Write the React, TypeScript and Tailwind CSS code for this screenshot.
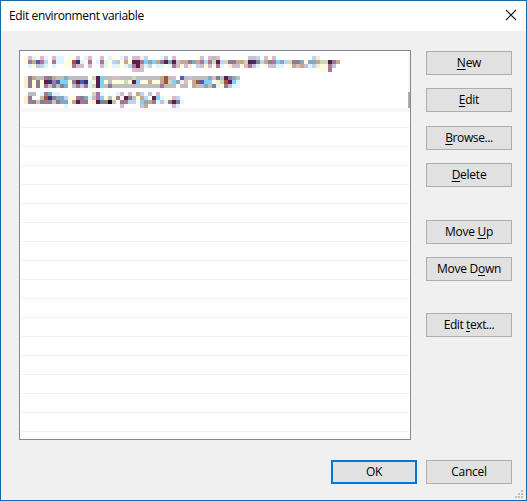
const PALETTE: Record<string, string> = {
  y: '#fffddb', c: '#def5ff', o: '#fdebd6', b: '#b9d8f0', v: '#c9c0dc', p: '#d6bcca',
  m: '#aa7596', d: '#5c1f4a', r: '#a5503f', k: '#33336b', n: '#17101c', g: '#bebebe',
  h: '#8b7d90', t: '#c4a78d', s: '#80d0ff', u: '#84a9bd', G: '#ced9b2', B: '#4d5cab',
};

const CELL = 4;

// Each string is one row of 4px mosaic cells; a dot leaves the cell empty.
const MOSAIC: string[] = [
  'yvcypc.pcc..yp.cp..p.cy.cp.pvob...cv.p.....yv.pgp.......vvb.pyp.........bo',
  'ymtBmb.mccyyrkcym.cmcybvytyddmsusthdudvtthutmbmGdbGhhttGdkhbthmsubGhhuyuutGGdht',
  '.cyvbc.c..yympp.p..pcyccycbmdpcb.ccycmpypo.bpypymc.oppypmvc.yvvcc.ytptvcboyymv',
  '...........................ppp............................................yym',
  '',
  'ohtggmhtgguggggg.GdsggppgggGggggggtrgp.Bgvgggguphgdhug',
  'ohyhydkmBssyhdBkcydsygyyyGydsyytyytrGsuopytrBssyoGrdsc',
  'ohyhymphghu.gmvmcGdsghggggggggggggmggg.gg.tggughcyhvcc',
  '',
  '.gg.cmucc........Gmc...cp.p.tb.v.p',
  'oh.ygrkhuubyymhucgmsygymydhgytbydsc.ypb',
  'omhphmhphuuytdmhyodhhngyhmbbysutmcvchdhc',
  '..........c.............p....vt......pc',
];

function ObscuredEntries() {
  return (
    <svg className="ml-1 mt-[5px] block" width="320" height="52" shapeRendering="crispEdges">
      {MOSAIC.flatMap((row, y) =>
        [...row].map((key, x) =>
          PALETTE[key] ? (
            <rect key={`${x}-${y}`} x={x * CELL} y={y * CELL} width={CELL} height={CELL} fill={PALETTE[key]} />
          ) : null,
        ),
      )}
    </svg>
  );
}

function Button({ label, accel, primary = false, className = '' }: { label: string; accel?: number; primary?: boolean; className?: string }) {
  const frame = primary ? 'border-2 border-[#0078d7]' : 'border border-[#adadad]';
  const tracking = label.endsWith('...') ? 'tracking-[-0.4px]' : 'tracking-[-0.25px]';
  return (
    <button className={`flex h-6 w-[86px] shrink-0 items-center justify-center whitespace-pre bg-[#e1e1e1] leading-none ${frame} ${tracking} ${className}`}>
      <span>
        {accel === undefined ? label : (
          <>
            {label.slice(0, accel)}
            <span className="underline decoration-1 underline-offset-2">{label[accel]}</span>
            {label.slice(accel + 1)}
          </>
        )}
      </span>
    </button>
  );
}

export default function App() {
  return (
    <div className="flex h-[501px] w-[527px] flex-col overflow-hidden border border-[#1769a8] bg-[#f0f0f0] font-['Open_Sans','Noto_Sans',sans-serif] text-[12px] text-black">
      <header className="flex h-[30px] shrink-0 items-center justify-between bg-white pl-2 pr-[9px]">
        <h1 className="leading-none tracking-[-0.37px]">Edit environment variable</h1>
        <svg className="-mt-[2px]" width="12" height="12" viewBox="0 0 12 12" fill="none" stroke="#111" strokeWidth="1.1">
          <path d="M1 1 11 11M11 1 1 11" />
        </svg>
      </header>
      <main className="flex gap-[15px] pl-[18px] pt-[19px]">
        <div className="flex h-[390px] w-[392px] flex-col border border-[#828790] bg-white">
          <div className="flex h-[57px] shrink-0 justify-between">
            <ObscuredEntries />
            <div className="flex w-[2px] flex-col bg-[#f7f7f7]">
              <div className="mt-[41px] h-4 bg-[#adadad]" />
            </div>
          </div>
          <div className="mx-px h-1 shrink-0 bg-[#f7f7f7]" />
          <div className="h-[15px] shrink-0" />
          {Array.from({ length: 17 }, (_, i) => (
            <div key={i} className="mx-px h-[19px] shrink-0 border-t border-[#f0f0f0] last:h-px" />
          ))}
        </div>
        <div className="flex flex-col pt-px">
          <Button label="New" accel={0} />
          <Button label="Edit" accel={0} className="mt-[13px]" />
          <Button label="Browse..." accel={0} className="mt-[14px]" />
          <Button label="Delete" accel={0} className="mt-[13px]" />
          <Button label="Move Up" accel={5} className="mt-[33px]" />
          <Button label="Move Down" accel={6} className="mt-[13px]" />
          <Button label="Edit text..." accel={5} className="mt-8" />
        </div>
      </main>
      <footer className="flex justify-end gap-[9px] pr-[14px] pt-5">
        <Button label="OK" primary />
        <Button label="Cancel" />
      </footer>
      <svg className="mr-[3px] mt-[6px] block self-end" width="8" height="8" fill="#bfbfbf" shapeRendering="crispEdges">
        <path d="M6 0h2v2h-2zM3 3h2v2h-2zM6 3h2v2h-2zM0 6h2v2h-2zM3 6h2v2h-2zM6 6h2v2h-2z" />
      </svg>
    </div>
  );
}
